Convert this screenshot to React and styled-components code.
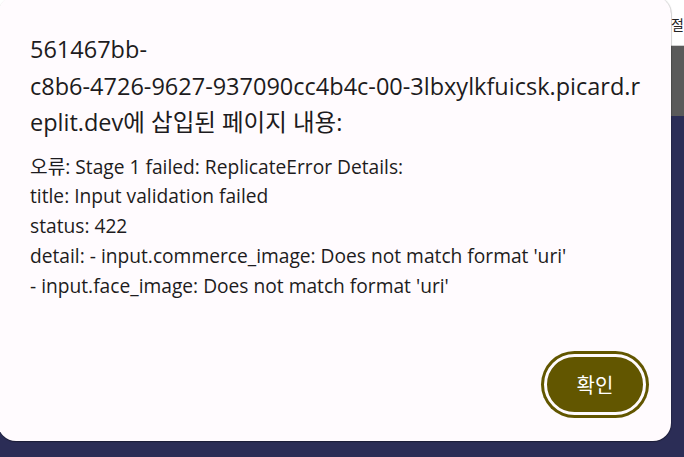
import React from 'react';
import styled, { createGlobalStyle } from 'styled-components';

const GlobalStyle = createGlobalStyle`
  html, body {
    margin: 0;
    padding: 0;
    background: #2b2d56;
  }
  body {
    font-family: "Open Sans", "Noto Sans CJK KR", sans-serif;
    overflow: hidden;
  }
`;

const Page = styled.div`
  position: relative;
  width: 684px;
  height: 457px;
  display: flex;
  flex-direction: column;
  background: #2b2d56;
  overflow: hidden;
`;

const Header = styled.header`
  height: 46px;
  flex: none;
  background: #ffffff;
  border-bottom: 1px solid #cfcfcf;
  display: flex;
  justify-content: flex-end;
  align-items: flex-start;
  padding: 14px 0 0;
  box-sizing: border-box;
  font-family: "Noto Sans CJK KR", sans-serif;
  font-size: 14px;
  color: #222;
  white-space: nowrap;
`;

const SubBar = styled.div`
  height: 70px;
  flex: none;
  background: #5a5a5a;
`;

const Dialog = styled.div`
  position: absolute;
  left: -2px;
  top: -4px;
  width: 673px;
  height: 445px;
  box-sizing: border-box;
  background: #fffbfe;
  border-radius: 18px;
  box-shadow: 0 1px 1px rgba(0, 0, 0, 0.35), 1px 0 1px rgba(0, 0, 0, 0.15);
  padding: 35px 22px 23px 32px;
  display: flex;
  flex-direction: column;
  color: #1d1b20;
`;

const Title = styled.div`
  font-size: 23.5px;
  line-height: 36.5px;
`;

const Line = styled.div`
  white-space: nowrap;
`;

const Message = styled.div`
  margin-top: 11px;
  font-size: 19.2px;
  line-height: 29.8px;
`;

const Footer = styled.div`
  margin-top: auto;
  display: flex;
  justify-content: flex-end;
`;

const OkButton = styled.button`
  width: 102px;
  height: 61px;
  margin: 3px;
  border-radius: 31px;
  border: 3px solid #fffbfe;
  box-shadow: 0 0 0 3px #625600;
  background: #625600;
  color: #ffffff;
  font-family: "Noto Sans CJK KR", sans-serif;
  font-size: 20px;
  cursor: pointer;
`;

const title = [
  '561467bb-',
  'c8b6-4726-9627-937090cc4b4c-00-3lbxylkfuicsk.picard.r',
  'eplit.dev에 삽입된 페이지 내용:',
];

const message = [
  '오류: Stage 1 failed: ReplicateError Details:',
  'title: Input validation failed',
  'status: 422',
  "detail: - input.commerce_image: Does not match format 'uri'",
  "- input.face_image: Does not match format 'uri'",
];

export default function App() {
  return (
    <>
      <GlobalStyle />
      <Page>
        <Header>할 절</Header>
        <SubBar />
        <Dialog role="dialog">
          <Title>
            {title.map((t) => (
              <Line key={t}>{t}</Line>
            ))}
          </Title>
          <Message>
            {message.map((t) => (
              <Line key={t}>{t}</Line>
            ))}
          </Message>
          <Footer>
            <OkButton>확인</OkButton>
          </Footer>
        </Dialog>
      </Page>
    </>
  );
}
